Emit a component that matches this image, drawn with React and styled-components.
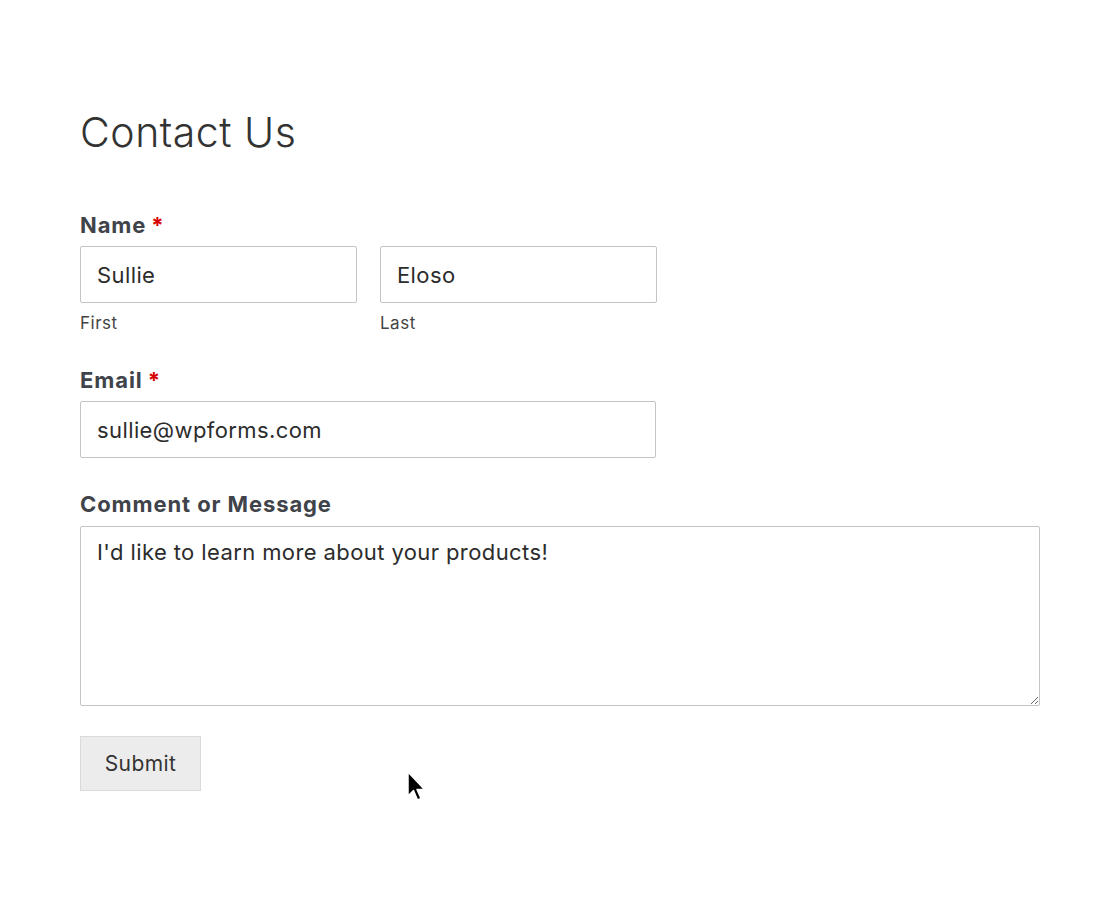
import styled, { createGlobalStyle } from "styled-components";

const GlobalStyle = createGlobalStyle`
  body {
    margin: 0;
    background: #fff;
    font-family: Inter, "Liberation Sans", Arial, sans-serif;
    color: #333;
  }
`;

const Page = styled.div`
  position: relative;
  min-height: 900px;
  padding: 106px 80px 0;
  box-sizing: border-box;
`;

const Title = styled.h1`
  margin: 0 0 54px;
  font-size: 41px;
  font-weight: 300;
  line-height: 52px;
  color: #333;
  letter-spacing: 0.5px;
`;

const Form = styled.form`
  display: flex;
  flex-direction: column;
`;

const Field = styled.div`
  display: flex;
  flex-direction: column;
  margin-bottom: ${(p) => p.$gap || 22}px;
`;

const Label = styled.label`
  font-size: 22px;
  font-weight: 700;
  color: #40434a;
  line-height: 26px;
  margin-bottom: 8px;
  letter-spacing: 0.9px;
`;

const Required = styled.span`
  color: #d60000;
  margin-left: 5px;
  font-weight: 700;
`;

const Row = styled.div`
  display: flex;
  gap: 23px;
`;

const Column = styled.div`
  display: flex;
  flex-direction: column;
  width: 277px;
`;

const Input = styled.input`
  box-sizing: border-box;
  width: ${(p) => p.$width || 277}px;
  height: 57px;
  border: 1px solid #c3c4c7;
  border-radius: 2px;
  padding: 0 16px;
  font-family: inherit;
  font-size: 22px;
  letter-spacing: 0.4px;
  color: #2c2c2c;
  background: #fff;
  outline: none;
`;

const SubLabel = styled.span`
  font-size: 17px;
  color: #444;
  margin-top: 9px;
  line-height: 22px;
  letter-spacing: 0.5px;
`;

const TextArea = styled.textarea`
  box-sizing: border-box;
  width: 960px;
  height: 180px;
  margin-top: 1px;
  border: 1px solid #c3c4c7;
  border-radius: 2px;
  padding: 11px 16px;
  font-family: inherit;
  font-size: 22px;
  letter-spacing: 0.4px;
  line-height: 28px;
  color: #2c2c2c;
  resize: vertical;
  outline: none;
`;

const SubmitButton = styled.button`
  align-self: flex-start;
  width: 121px;
  height: 55px;
  margin-top: 8px;
  background: #ececec;
  border: 1px solid #dadada;
  font-family: inherit;
  font-size: 21px;
  letter-spacing: 0.4px;
  color: #333;
  cursor: pointer;
`;

const Cursor = styled.svg`
  position: absolute;
  left: 406px;
  top: 770px;
`;

export default function App() {
  return (
    <>
      <GlobalStyle />
      <Page>
        <Title>Contact Us</Title>
        <Form onSubmit={(e) => e.preventDefault()}>
          <Field $gap={33}>
            <Label>
              Name<Required>*</Required>
            </Label>
            <Row>
              <Column>
                <Input defaultValue="Sullie" />
                <SubLabel>First</SubLabel>
              </Column>
              <Column>
                <Input defaultValue="Eloso" />
                <SubLabel>Last</SubLabel>
              </Column>
            </Row>
          </Field>
          <Field $gap={33}>
            <Label>
              Email<Required>*</Required>
            </Label>
            <Input $width={576} defaultValue="sullie@wpforms.com" />
          </Field>
          <Field $gap={22}>
            <Label>Comment or Message</Label>
            <TextArea defaultValue="I'd like to learn more about your products!" />
          </Field>
          <SubmitButton type="submit">Submit</SubmitButton>
        </Form>
        <Cursor width="22" height="36" viewBox="0 0 22 36">
          <path
            d="M2 2 L2 26 L7.5 20.5 L11.5 30 L15 28.5 L11 19.5 L18.5 19.5 Z"
            fill="#000"
            stroke="#fff"
            strokeWidth="1.5"
            strokeLinejoin="round"
          />
        </Cursor>
      </Page>
    </>
  );
}
